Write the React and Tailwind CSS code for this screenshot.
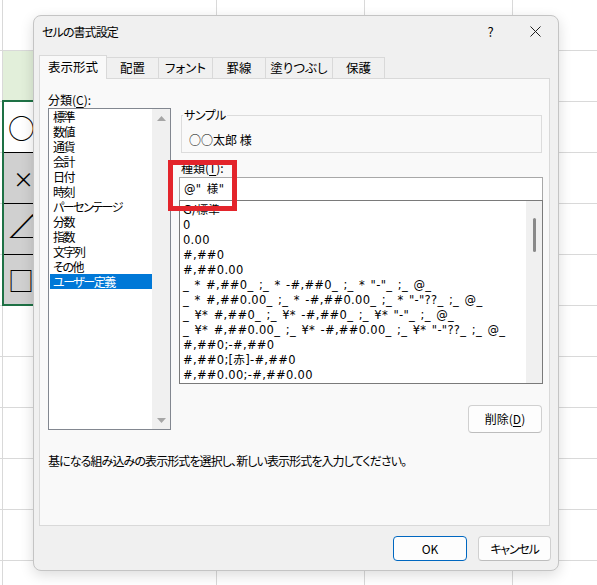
import React from "react";

const categories = [
  "標準",
  "数値",
  "通貨",
  "会計",
  "日付",
  "時刻",
  "パーセンテージ",
  "分数",
  "指数",
  "文字列",
  "その他",
  "ユーザー定義",
];

const formats = [
  "G/標準",
  "0",
  "0.00",
  "#,##0",
  "#,##0.00",
  '_ * #,##0_ ;_ * -#,##0_ ;_ * "-"_ ;_ @_',
  '_ * #,##0.00_ ;_ * -#,##0.00_ ;_ * "-"??_ ;_ @_',
  '_ ¥* #,##0_ ;_ ¥* -#,##0_ ;_ ¥* "-"_ ;_ @_',
  '_ ¥* #,##0.00_ ;_ ¥* -#,##0.00_ ;_ ¥* "-"??_ ;_ @_',
  "#,##0;-#,##0",
  "#,##0;[赤]-#,##0",
  "#,##0.00;-#,##0.00",
];

function SymbolCell({ r }) {
  if (r === 1) {
    return <div className="w-[214px] bg-[#e2efda] border-r border-b border-[#d9d9d9]" />;
  }
  if (r === 2) {
    return (
      <div className="w-[214px] bg-white border-b border-b-black flex items-center pl-[5px] text-[27px] leading-none">
        ○
      </div>
    );
  }
  if (r === 3) {
    return (
      <div className="w-[214px] bg-[#d0d0d0] border-b border-b-black flex items-center pl-[10px] text-[21px] leading-none">
        ×
      </div>
    );
  }
  if (r === 4) {
    return (
      <div className="w-[214px] bg-[#d0d0d0] border-b border-b-black flex items-center pl-[5px] pb-[6px] text-[29px] leading-none">
        <span className="inline-block origin-left scale-x-[1.7]">△</span>
      </div>
    );
  }
  if (r === 5) {
    return (
      <div className="w-[214px] bg-[#d0d0d0] border-b border-[#d9d9d9] flex items-center pl-[5px] text-[26px] leading-none">
        □
      </div>
    );
  }
  return <div className="w-[214px] border-r border-b border-[#d9d9d9]" />;
}

function Sheet() {
  const rows = Array.from({ length: 12 }, (_, i) => i);
  return (
    <div className="flex flex-col">
      {rows.map((r) => (
        <div key={r} className="flex h-[51px] shrink-0">
          <div className="w-[3px] border-r border-b border-[#d9d9d9]" />
          <SymbolCell r={r} />
          <div className="w-[148px] border-r border-b border-[#d9d9d9]" />
          <div className="w-[148px] border-r border-b border-[#d9d9d9]" />
          <div className="flex-1 border-b border-[#d9d9d9]" />
        </div>
      ))}
    </div>
  );
}

function Arrow({ up }) {
  return (
    <svg width="9" height="5" viewBox="0 0 9 5">
      {up ? (
        <polygon points="0,5 9,5 4.5,0" fill="#a6a6a6" />
      ) : (
        <polygon points="0,0 9,0 4.5,5" fill="#a6a6a6" />
      )}
    </svg>
  );
}

function Tab({ label, w, selected }) {
  if (selected) {
    return (
      <div
        className={`${w} h-[24px] -mb-px bg-[#f9f9f9] border border-b-0 border-[#d9d9d9] flex items-center justify-center text-[12.5px]`}
      >
        {label}
      </div>
    );
  }
  return (
    <div
      className={`${w} h-[21px] bg-[#f0f0f0] border-t border-r border-[#d9d9d9] flex items-center justify-center text-[12.5px]`}
    >
      {label}
    </div>
  );
}

function Dialog() {
  return (
    <div className="absolute left-[33px] top-[15px] w-[526px] h-[556px] rounded-[8px] border border-[#c4c4c4] bg-[#f0f0f0] shadow-[0_4px_14px_rgba(0,0,0,0.14)] flex flex-col overflow-hidden">
      {/* title bar */}
      <div className="h-[39px] shrink-0 flex items-start">
        <div className="pl-[8px] pt-[8px] text-[12px] leading-[16px] tracking-[-0.9px]">セルの書式設定</div>
        <div className="ml-auto flex h-[31px]">
          <div className="w-[45px] flex items-center justify-center text-[13px] leading-none">?</div>
          <div className="w-[45px] flex items-center justify-center">
            <svg width="11" height="11" viewBox="0 0 11 11">
              <path d="M0.5 0.5 L10.5 10.5 M10.5 0.5 L0.5 10.5" stroke="#1f1f1f" strokeWidth="1" />
            </svg>
          </div>
        </div>
      </div>

      {/* tabs */}
      <div className="h-[23px] shrink-0 flex items-end pl-[5px] relative z-10">
        <Tab label="表示形式" w="w-[68px]" selected />
        <Tab label="配置" w="w-[52px]" />
        <Tab label="フォント" w="w-[54px]" />
        <Tab label="罫線" w="w-[53px]" />
        <Tab label="塗りつぶし" w="w-[67px]" />
        <Tab label="保護" w="w-[52px]" />
      </div>

      {/* panel */}
      <div className="ml-[5px] w-[511px] h-[448px] shrink-0 border border-[#d9d9d9] bg-[#f9f9f9] pl-[8px] pt-[13px] flex flex-col">
        <div className="flex">
          {/* left column */}
          <div className="w-[123px] flex flex-col">
            <div className="h-[16px] leading-[16px] text-[12px]">
              分類(<span className="underline underline-offset-2">C</span>):
            </div>
            <div className="h-[322px] border border-[#828790] bg-white flex">
              <div className="flex-1 pl-[1px] text-[12px] leading-[15px] tracking-[-1.5px]">
                {categories.map((c, i) => (
                  <div
                    key={c}
                    className={i === 11 ? "h-[15px] pl-[3px] bg-[#0078d7] text-white" : "h-[15px] pl-[3px]"}
                  >
                    {c}
                  </div>
                ))}
              </div>
              <div className="w-[18px] bg-[#f0f0f0] flex flex-col justify-between">
                <div className="h-[18px] flex items-center justify-center">
                  <Arrow up />
                </div>
                <div className="h-[18px] flex items-center justify-center">
                  <Arrow />
                </div>
              </div>
            </div>
          </div>

          {/* right column */}
          <div className="ml-[8px] w-[364px] flex flex-col">
            <fieldset className="mt-[15px] ml-[2px] w-[361px] border border-[#dcdcdc] pl-[1px] pb-[4px]">
              <legend className="px-[1px] text-[12px] leading-[16px] tracking-[-0.5px]">サンプル</legend>
              <div className="mt-[9px] pl-[6px] text-[12px] leading-[16px]">○○太郎 様</div>
            </fieldset>
            <div className="mt-[7px] ml-[2px] h-[16px] leading-[16px] text-[12px]">
              種類(<span className="underline underline-offset-2">T</span>):
            </div>
            <div className="mt-[1px] h-[23px] border border-b-0 border-[#a8a8a8] bg-white pl-[4px] text-[11.5px] leading-[22px] whitespace-pre tracking-[0.3px] [word-spacing:1.5px] font-['DejaVu_Sans','Noto_Sans_CJK_JP',sans-serif]">
              {'@" 様"'}
            </div>
            <div className="h-[184px] border border-[#7a7a7a] bg-white flex overflow-hidden">
              <div className="flex-1 pl-[3px] pt-[2px] text-[11.5px] leading-[15px] whitespace-pre overflow-hidden tracking-[0.3px] [word-spacing:1.5px] font-['DejaVu_Sans','Noto_Sans_CJK_JP',sans-serif]">
                {formats.map((f) => (
                  <div key={f} className="h-[15px]">
                    {f}
                  </div>
                ))}
              </div>
              <div className="w-[16px] bg-[#f0f0f0] flex justify-center">
                <div className="mt-[17px] w-[3px] h-[34px] rounded-full bg-[#8a8a8a]" />
              </div>
            </div>
            <button className="self-end mr-[1px] mt-[21px] w-[74px] h-[28px] rounded-[4px] border border-[#d0d0d0] border-b-[#bdbdbd] bg-[#fdfdfd] text-[12px] leading-none">
              削除(<span className="underline underline-offset-2">D</span>)
            </button>
          </div>
        </div>
        <div className="mt-[20px] text-[12px] leading-[16px] tracking-[-0.9px]">
          基になる組み込みの表示形式を選択し、新しい表示形式を入力してください。
        </div>
      </div>

      {/* footer */}
      <div className="flex-1 flex justify-end items-start pt-[10px] pr-[7px] gap-[11px]">
        <button className="w-[74px] h-[25px] rounded-[4px] border border-[#0067c0] bg-[#fdfdfd] text-[12px] leading-none">
          OK
        </button>
        <button className="w-[73px] h-[25px] rounded-[4px] border border-[#d0d0d0] border-b-[#bdbdbd] bg-[#fdfdfd] text-[12px] leading-none tracking-[-1.2px]">
          キャンセル
        </button>
      </div>
    </div>
  );
}

export default function App() {
  return (
    <div className="relative w-[597px] h-[585px] overflow-hidden bg-white text-black font-['Noto_Sans_CJK_JP',sans-serif] [font-feature-settings:'palt']">
      <Sheet />
      <div className="absolute left-[2px] top-[100px] w-[214px] h-[206px] border-2 border-[#1e7145]" />
      <Dialog />
      <div className="absolute left-[168px] top-[160px] w-[69px] h-[51px] border-[5px] border-[#e3242b]" />
    </div>
  );
}
